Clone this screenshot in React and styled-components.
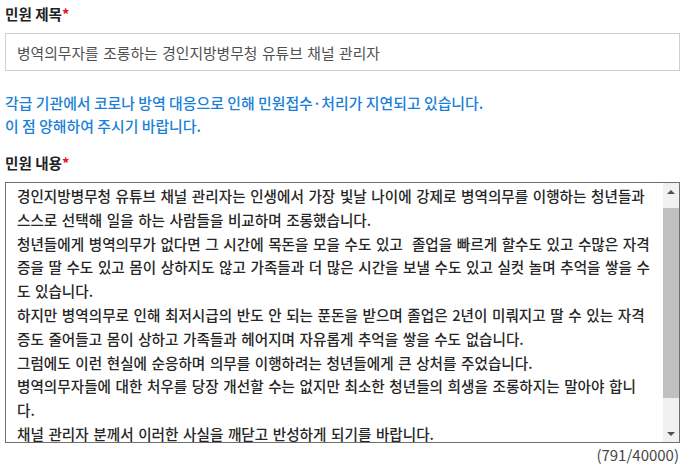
import React, { useEffect, useRef } from 'react';
import styled, { createGlobalStyle } from 'styled-components';

const GlobalStyle = createGlobalStyle`
  body {
    margin: 0;
    background: #fff;
    font-family: "Noto Sans CJK KR", "Noto Sans", sans-serif;
  }
`;

const Wrapper = styled.div`
  width: 675px;
  padding: 4px 0 0 5px;
`;

const Label = styled.div`
  font-size: 14.6px;
  font-weight: 700;
  color: #222;
  line-height: 20px;
  height: 20px;
  margin-bottom: 9px;
`;

const Star = styled.span`
  color: #e8141c;
`;

const TitleInput = styled.input`
  display: block;
  box-sizing: border-box;
  width: 675px;
  height: 38px;
  border: 1px solid #cfcfcf;
  padding: 0 11px;
  font-family: inherit;
  font-size: 14.8px;
  word-spacing: 1.2px;
  color: #505050;
  outline: none;
`;

const Notice = styled.p`
  margin: 20px 0 16px;
  font-size: 14.9px;
  font-weight: 500;
  line-height: 23px;
  color: #1a7fd6;
`;

const Field = styled.div`
  position: relative;
  width: 675px;
  height: 261px;
`;

const Body = styled.textarea`
  display: block;
  box-sizing: border-box;
  width: 100%;
  height: 100%;
  border: 1px solid #6f6f6f;
  padding: 12px 26px 31px 11px;
  font-family: inherit;
  font-size: 14.6px;
  font-weight: 500;
  word-spacing: 1.3px;
  line-height: 23.8px;
  color: #262626;
  resize: none;
  overflow: hidden;
  outline: none;
`;

/* drawn scrollbar, sits over the right edge of the textarea */
const ScrollBar = styled.div`
  position: absolute;
  top: 1px;
  right: 1px;
  bottom: 1px;
  width: 16px;
  display: flex;
  flex-direction: column;
  background: #f1f1f1;
`;

const ArrowButton = styled.div`
  height: 17px;
  flex: none;
  display: flex;
  align-items: center;
  justify-content: center;

  &::before {
    content: "";
    border-left: 4px solid transparent;
    border-right: 4px solid transparent;
    ${(p) =>
      p.down
        ? 'border-top: 4px solid #505050;'
        : 'border-bottom: 4px solid #505050;'}
  }
`;

const Track = styled.div`
  flex: 1;
`;

const Thumb = styled.div`
  margin: 8px 0 0;
  height: 190px;
  background: #c1c1c1;
`;

const Counter = styled.div`
  text-align: right;
  padding-right: 1px;
  font-size: 15px;
  line-height: 24px;
  color: #474747;
`;

const content = [
  '경인지방병무청 유튜브 채널 관리자는 인생에서 가장 빛날 나이에 강제로 병역의무를 이행하는 청년들과',
  '스스로 선택해 일을 하는 사람들을 비교하며 조롱했습니다.',
  '청년들에게 병역의무가 없다면 그 시간에 목돈을 모을 수도 있고  졸업을 빠르게 할수도 있고 수많은 자격',
  '증을 딸 수도 있고 몸이 상하지도 않고 가족들과 더 많은 시간을 보낼 수도 있고 실컷 놀며 추억을 쌓을 수',
  '도 있습니다.',
  '하지만 병역의무로 인해 최저시급의 반도 안 되는 푼돈을 받으며 졸업은 2년이 미뤄지고 딸 수 있는 자격',
  '증도 줄어들고 몸이 상하고 가족들과 헤어지며 자유롭게 추억을 쌓을 수도 없습니다.',
  '그럼에도 이런 현실에 순응하며 의무를 이행하려는 청년들에게 큰 상처를 주었습니다.',
  '병역의무자들에 대한 처우를 당장 개선할 수는 없지만 최소한 청년들의 희생을 조롱하지는 말아야 합니',
  '다.',
  '채널 관리자 분께서 이러한 사실을 깨닫고 반성하게 되기를 바랍니다.',
].join('\n');

export default function App() {
  const bodyRef = useRef(null);

  useEffect(() => {
    if (bodyRef.current) bodyRef.current.scrollTop = 11;
  }, []);

  return (
    <>
      <GlobalStyle />
      <Wrapper>
        <Label>
          민원 제목<Star>*</Star>
        </Label>
        <TitleInput
          type="text"
          defaultValue="병역의무자를 조롱하는 경인지방병무청 유튜브 채널 관리자"
        />
        <Notice>
          각급 기관에서 코로나 방역 대응으로 인해 민원접수·처리가 지연되고 있습니다.
          <br />
          이 점 양해하여 주시기 바랍니다.
        </Notice>
        <Label>
          민원 내용<Star>*</Star>
        </Label>
        <Field>
          <Body ref={bodyRef} wrap="off" defaultValue={content} />
          <ScrollBar>
            <ArrowButton />
            <Track>
              <Thumb />
            </Track>
            <ArrowButton down />
          </ScrollBar>
        </Field>
        <Counter>(791/40000)</Counter>
      </Wrapper>
    </>
  );
}
